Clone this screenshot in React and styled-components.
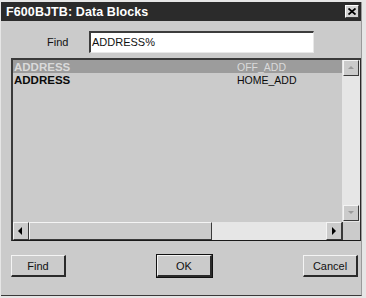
import React from 'react';
import styled, { createGlobalStyle } from 'styled-components';

const GlobalStyle = createGlobalStyle`
  html, body {
    margin: 0;
    padding: 0;
    background: #e6e6e6;
  }
  body {
    font-family: 'Liberation Sans', Arial, sans-serif;
  }
`;

const Page = styled.div`
  width: 366px;
  height: 298px;
  padding: 2px 4px 2px 1px;
  box-sizing: border-box;
`;

const Window = styled.div`
  display: flex;
  flex-direction: column;
  width: 361px;
  height: 294px;
  box-sizing: border-box;
  background: #cbcbcb;
  border-bottom: 1px solid #3a3a3a;
  border-right: 1px solid #9a9a9a;
`;

const TitleBar = styled.div`
  display: flex;
  align-items: center;
  justify-content: space-between;
  height: 19px;
  padding: 0 2px 0 5px;
  background: #2b2b2b;
  color: #ffffff;
`;

const Title = styled.span`
  font-size: 12.5px;
  font-weight: bold;
  letter-spacing: 0.1px;
`;

const CloseButton = styled.div`
  display: flex;
  align-items: center;
  justify-content: center;
  width: 14px;
  height: 13px;
  box-sizing: border-box;
  background: #d4d4d4;
  border-top: 1px solid #ffffff;
  border-left: 1px solid #ffffff;
  border-right: 1px solid #3a3a3a;
  border-bottom: 1px solid #3a3a3a;
`;

const Content = styled.div`
  display: flex;
  flex-direction: column;
  padding: 10px 1px 0 10px;
`;

const FindRow = styled.div`
  display: flex;
  align-items: center;
  height: 22px;
`;

const FindLabel = styled.span`
  width: 78px;
  padding-left: 36px;
  box-sizing: border-box;
  font-size: 11px;
  color: #111;
`;

const FindInput = styled.div`
  width: 225px;
  height: 22px;
  box-sizing: border-box;
  background: #ffffff;
  border-top: 2px solid #3c3c3c;
  border-left: 2px solid #3c3c3c;
  border-right: 1px solid #e8e8e8;
  border-bottom: 1px solid #e8e8e8;
  padding: 3px 0 0 1px;
  font-size: 11px;
  color: #111;
`;

const ListBox = styled.div`
  display: grid;
  grid-template-columns: 1fr 18px;
  grid-template-rows: 162px 18px;
  margin-top: 5px;
  width: 350px;
  box-sizing: border-box;
  border-top: 2px solid #3a3a3a;
  border-left: 2px solid #3a3a3a;
  border-right: 1px solid #2a2a2a;
  border-bottom: 1px solid #1a1a1a;
  background: #cbcbcb;
`;

const Rows = styled.div`
  display: flex;
  flex-direction: column;
  overflow: hidden;
`;

const Row = styled.div`
  display: flex;
  align-items: center;
  height: 13px;
  background: ${p => (p.selected ? '#9c9c9c' : 'transparent')};
  color: ${p => (p.selected ? '#dadada' : '#0a0a0a')};
`;

const NameCell = styled.span`
  width: 223px;
  padding-left: 1px;
  font-size: 11.5px;
  font-weight: bold;
`;

const ValueCell = styled.span`
  font-size: 10.5px;
`;

const VScroll = styled.div`
  display: flex;
  flex-direction: column;
  justify-content: space-between;
  background: #e6e6e6;
  padding: 0 1px 1px 1px;
`;

const HScroll = styled.div`
  display: flex;
  background: #e6e6e6;
`;

const ArrowButton = styled.div`
  display: flex;
  align-items: center;
  justify-content: center;
  width: 16px;
  height: 16px;
  flex: none;
  box-sizing: border-box;
  background: #cbcbcb;
  border-top: 1px solid #f4f4f4;
  border-left: 1px solid #f4f4f4;
  border-right: 1px solid #3a3a3a;
  border-bottom: 1px solid #3a3a3a;
`;

const HArrow = styled(ArrowButton)`
  height: 18px;
`;

const Thumb = styled.div`
  width: 183px;
  height: 18px;
  box-sizing: border-box;
  background: #cbcbcb;
  border-top: 1px solid #f4f4f4;
  border-left: 1px solid #f4f4f4;
  border-right: 1px solid #3a3a3a;
  border-bottom: 1px solid #3a3a3a;
`;

const Track = styled.div`
  flex: 1;
`;

const Corner = styled.div`
  background: #cbcbcb;
  border-left: 1px solid #3a3a3a;
`;

const ButtonRow = styled.div`
  display: flex;
  justify-content: space-between;
  margin-top: 14px;
  padding-right: 2px;
`;

const Button = styled.div`
  display: flex;
  align-items: center;
  justify-content: center;
  width: 55px;
  height: 22px;
  box-sizing: border-box;
  background: #cbcbcb;
  font-size: 11px;
  color: #111;
  border-top: 1px solid #f4f4f4;
  border-left: 1px solid #f4f4f4;
  border-right: 2px solid #2a2a2a;
  border-bottom: 2px solid #2a2a2a;
  outline: ${p => (p.primary ? '1px solid #111' : 'none')};
`;

const Tri = ({ dir, color }) => {
  const pts = {
    up: '1,5 4,2 7,5',
    down: '1,2 4,5 7,2',
    left: '5,0 5,8 1,4',
    right: '2,0 2,8 6,4',
  }[dir];
  return (
    <svg width="8" height="8" viewBox="0 0 8 8">
      <polygon points={pts} fill={color} />
    </svg>
  );
};

const rows = [
  { name: 'ADDRESS', value: 'OFF_ADD', selected: true },
  { name: 'ADDRESS', value: 'HOME_ADD' },
];

export default function App() {
  return (
    <>
      <GlobalStyle />
      <Page>
        <Window>
          <TitleBar>
            <Title>F600BJTB: Data Blocks</Title>
            <CloseButton>
              <svg width="8" height="7" viewBox="0 0 8 7">
                <path d="M0.5 0.5 L7.5 6.5 M7.5 0.5 L0.5 6.5" stroke="#000" strokeWidth="1.8" />
              </svg>
            </CloseButton>
          </TitleBar>
          <Content>
            <FindRow>
              <FindLabel>Find</FindLabel>
              <FindInput>ADDRESS%</FindInput>
            </FindRow>
            <ListBox>
              <Rows>
                {rows.map((r, i) => (
                  <Row key={i} selected={r.selected}>
                    <NameCell>{r.name}</NameCell>
                    <ValueCell>{r.value}</ValueCell>
                  </Row>
                ))}
              </Rows>
              <VScroll>
                <ArrowButton><Tri dir="up" color="#9a9a9a" /></ArrowButton>
                <ArrowButton><Tri dir="down" color="#9a9a9a" /></ArrowButton>
              </VScroll>
              <HScroll>
                <HArrow><Tri dir="left" color="#000" /></HArrow>
                <Thumb />
                <Track />
                <HArrow><Tri dir="right" color="#000" /></HArrow>
              </HScroll>
              <Corner />
            </ListBox>
            <ButtonRow>
              <Button>Find</Button>
              <Button primary>OK</Button>
              <Button>Cancel</Button>
            </ButtonRow>
          </Content>
        </Window>
      </Page>
    </>
  );
}
